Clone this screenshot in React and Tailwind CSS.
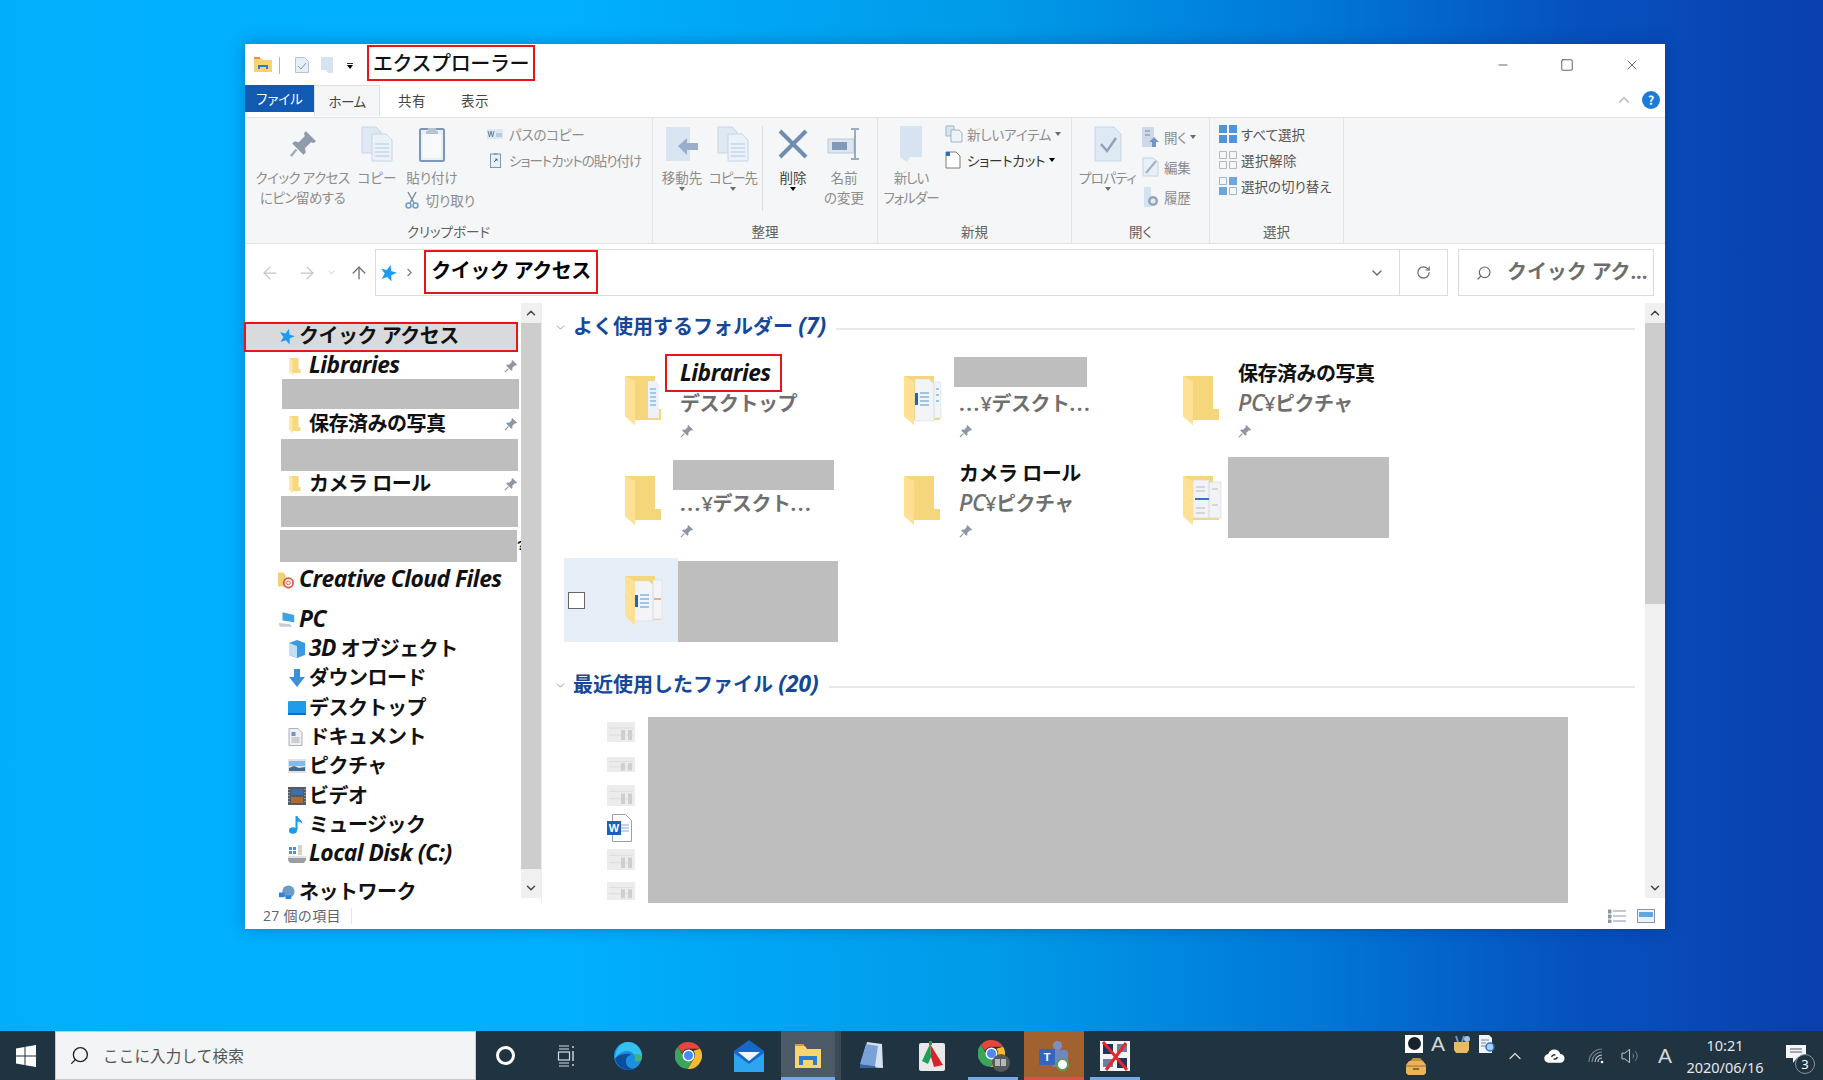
import React from "react";
import { ArrowLeft, ArrowRight, ArrowUp, ChevronDown, ChevronRight, ChevronUp, RotateCw, Search, Minus, Square, X } from "lucide-react";

const jp = "font-['Open_Sans','Noto_Sans_CJK_JP',sans-serif]";
const palt = "[font-feature-settings:'palt'] font-['Noto_Sans_CJK_JP',sans-serif]";

const Lat = ({ children }) => <i className="text-[1.14em] leading-none">{children}</i>;

const Star = ({ className = "w-4 h-4" }) => (
  <svg viewBox="0 0 16 16" className={`rotate-[15deg] ${className}`}>
    <path d="M8 .5 10 6l5.700.3-4.500 3.500L12.800 15.500 8 12.300 3.200 15.500l1.600-5.700L.3 6.300 6 6z" fill="#1e9bf0" />
  </svg>
);

const Pin = ({ className = "w-3 h-3" }) => (
  <svg viewBox="0 0 16 16" className={className}>
    <path d="M9.5 1 15 6.500 13.700 7.500 12.600 7 9.500 10 9.700 12.500 8.500 13.500 2.500 7.500 3.500 6.300 6 6.500 9 3.400 8.500 2.300z" fill="#8d96a3" />
    <path d="M5 11 1 15" stroke="#8d96a3" strokeWidth="1.500" />
  </svg>
);

const NavFolder = () => (
  <svg viewBox="0 0 12 18" className="w-[13px] h-[18px]">
    <path d="M1 1h9v11h2v4H4v2l-3-3z" fill="#f7d77f" />
    <path d="M1 1l3 2v15l-3-3z" fill="#ffe6a3" />
  </svg>
);

// big folder of the tile view, doc says what is sticking out of it
const BigFolder = ({ doc }) => (
  <svg viewBox="0 0 40 50" className="w-[40px] h-[50px]">
    <path d="M1 1h30v33h6v11H11v5L1 41z" fill="#f6d67b" />
    {doc === "side" && <path d="M24 6h8l3 4v33H24z" fill="#eef1f5" />}
    {doc === "side" && <path d="M26 14h6M26 18h6M26 22h6M26 26h6M26 30h6" stroke="#5a9bdc" strokeWidth="1.200" />}
    {doc === "blue" && <path d="M12 4h14l5 5v37H12zM31 7h7v36h-7z" fill="#f3f4f6" stroke="#d9dce0" strokeWidth=".6" />}
    {doc === "blue" && <path d="M12 18h3v12h-3z" fill="#1f66c1" />}
    {doc === "blue" && <path d="M17 18h9M17 22h9M17 26h9M17 30h9M33 14h3M33 20h3M33 26h3" stroke="#4b93d8" strokeWidth="1.100" />}
    {doc === "sheet" && <path d="M11 5h16v38H11zM27 7h12v36H27z" fill="#f1f3f5" stroke="#d5d8dc" strokeWidth=".6" />}
    {doc === "sheet" && <path d="M13 24h14" stroke="#1f66c1" strokeWidth="1.800" />}
    {doc === "sheet" && <path d="M14 12h9M14 16h9M14 33h9M14 38h9M30 14h6M30 30h6" stroke="#c9ccd1" strokeWidth="1.500" />}
    {doc === "orange" && <path d="M10 6h15l4 4v36H10zM29 5h9v39h-9z" fill="#f3f4f6" stroke="#d9dce0" strokeWidth=".6" />}
    {doc === "orange" && <path d="M11 20h3v12h-3z" fill="#1f66c1" />}
    {doc === "orange" && <path d="M16 20h9M16 24h9M16 28h9M16 32h9" stroke="#4b93d8" strokeWidth="1.100" />}
    {doc === "orange" && <path d="M30 24h7" stroke="#e8906a" strokeWidth="1.500" />}
    <path d="M1 1l10 5v44L1 41z" fill="#ffe196" />
  </svg>
);

const PageIcon = ({ lines }) => (
  <svg viewBox="0 0 32 36" className="w-[32px] h-[36px]">
    <path d="M1 1h14l5 5v21H1z" fill="#dfe9f4" stroke="#c6d5e6" />
    <path d="M11 8h14l6 6v21H11z" fill="#eaf1f8" stroke="#c6d5e6" />
    {lines && <path d="M14 18h14M14 22h14M14 26h14M14 30h14" stroke="#b6c8dc" />}
  </svg>
);

const Clipboard = () => (
  <svg viewBox="0 0 26 36" className="w-[26px] h-[36px]">
    <rect x="1" y="3" width="24" height="32" rx="1.500" fill="#e8eff7" stroke="#7d97b8" strokeWidth="2" />
    <rect x="4" y="8" width="18" height="24" fill="#f7f9fb" />
    <path d="M9 5V2h8v3h2v3H7V5z" fill="#b7c4d4" />
  </svg>
);

const MoveTo = () => (
  <svg viewBox="0 0 34 36" className="w-[34px] h-[36px]">
    <path d="M1 1h24v34H1z" fill="#d9e5f2" />
    <path d="M13 20 22 12v5h11v7H22v5z" fill="#98afca" />
  </svg>
);

const Caret = ({ dark }) => (
  <span className={`block w-0 h-0 border-x-[3px] border-x-transparent border-t-[4px] ${dark ? "border-t-black" : "border-t-[#6b6b6b]"}`} />
);

const Small = ({ icon, text, className = "text-[#8c8c8c] tracking-[-0.2px]", caret, dark }) => (
  <div className="flex items-center h-[26px]">
    <span className="w-[22px] flex justify-start items-center shrink-0">{icon}</span>
    <span className={`text-[13.5px] whitespace-nowrap ${palt} ${className}`}>{text}</span>
    {caret && <span className="ml-[4px]"><Caret dark={dark} /></span>}
  </div>
);

const BigBtn = ({ w, ml = "", icon, lines, caret, color = "text-[#8c8c8c]", label = "" }) => (
  <div className={`${w} ${ml} shrink-0 flex flex-col items-center`}>
    <div className="h-[35px] flex items-center justify-center">{icon}</div>
    <div className="mt-[6px] flex flex-col items-center">
      {lines.map((l) => (
        <span key={l} className={`text-[13.5px] leading-[20px] whitespace-nowrap ${palt} ${color} ${label}`}>{l}</span>
      ))}
      {caret && <Caret dark={caret === "dark"} />}
    </div>
  </div>
);

const Group = ({ w, label, children }) => (
  <div className={`${w} h-full shrink-0 flex flex-col border-r border-[#e2e3e5]`}>
    <div className="h-[102px] pt-[8px] flex">{children}</div>
    <div className={`flex-1 text-center text-[13.5px] leading-[23px] text-[#5f5f5f] ${palt}`}>{label}</div>
  </div>
);

const Ribbon = () => (
  <div className="h-[127px] flex bg-[#f5f6f7] border-y border-[#e2e3e5] shrink-0">
    <Group w="w-[408px]" label="クリップボード">
      <BigBtn w="w-[101px]" ml="ml-[7px]" lines={["クイック アクセス", "にピン留めする"]} label="tracking-[-0.5px]"
        icon={
          <svg viewBox="0 0 30 30" className="w-[28px] h-[28px]">
            <path d="M18 1 29 12 26 14 23.500 13 17 19.500 18 24 15.500 26.500 3.500 14.500 6 12 10.500 13 17 6.500 16 4z" fill="#8f9bab" />
            <path d="M8 21 2 28" stroke="#a3adba" strokeWidth="2.500" />
          </svg>
        } />
      <BigBtn w="w-[40px]" ml="ml-[4px]" lines={["コピー"]} icon={<PageIcon lines />} />
      <div className="ml-[7px] w-[56px] shrink-0 flex flex-col items-center">
        <BigBtn w="w-[56px]" lines={["貼り付け"]} icon={<Clipboard />} />
        <div className="mt-[3px] flex items-center w-[80px] ml-[25px]">
          <svg viewBox="0 0 14 18" className="w-[14px] h-[18px] mr-[7px] shrink-0">
            <path d="M3 1l6 11M11 1 5 12" stroke="#7d8da3" strokeWidth="1.500" />
            <circle cx="3.500" cy="14.500" r="2.500" fill="none" stroke="#6f9ccc" strokeWidth="1.500" />
            <circle cx="10.500" cy="14.500" r="2.500" fill="none" stroke="#6f9ccc" strokeWidth="1.500" />
          </svg>
          <span className={`text-[13.5px] whitespace-nowrap text-[#8c8c8c] ${palt}`}>切り取り</span>
        </div>
      </div>
      <div className="ml-[27px] -mt-[5px] flex flex-col">
        <Small text="パスのコピー"
          icon={
            <svg viewBox="0 0 16 10" className="w-[16px] h-[10px]">
              <rect width="16" height="10" fill="#dfe7f0" />
              <path d="M1 2l1.500 6L4 2l1.500 6L7 2" stroke="#5d7ea6" fill="none" />
              <path d="M9 5h6M9 7h6" stroke="#9ab0c8" />
            </svg>
          } />
        <Small text="ショートカットの貼り付け" className="text-[#8c8c8c] tracking-[-1px]"
          icon={
            <svg viewBox="0 0 11 16" className="w-[11px] h-[16px] ml-[3px]">
              <rect x=".5" y="2" width="10" height="13.500" fill="#e8eff7" stroke="#7d97b8" />
              <path d="M3.500 1h4v2h-4z" fill="#8ea2ba" />
              <path d="M4 10 7 7M5 7h2v2" stroke="#45689a" fill="none" />
            </svg>
          } />
      </div>
    </Group>

    <Group w="w-[225px]" label="整理">
      <BigBtn w="w-[46px]" ml="ml-[6px]" lines={["移動先"]} caret="gray" icon={<MoveTo />} />
      <BigBtn w="w-[48px]" ml="ml-[4px]" lines={["コピー先"]} caret="gray" label="tracking-[-1px]" icon={<PageIcon lines />} />
      <div className="w-px h-[85px] bg-[#dcdde0] ml-[5px] shrink-0" />
      <BigBtn w="w-[30px]" ml="ml-[15px]" lines={["削除"]} caret="dark" color="text-[#444]"
        icon={
          <svg viewBox="0 0 30 30" className="w-[30px] h-[30px]">
            <path d="M2 2 28 28M28 2 2 28" stroke="#6f8db3" strokeWidth="4" />
          </svg>
        } />
      <BigBtn w="w-[46px]" ml="ml-[13px]" lines={["名前", "の変更"]}
        icon={
          <svg viewBox="0 0 34 32" className="w-[34px] h-[32px]">
            <rect x="1" y="11" width="26" height="14" fill="#dce6f1" stroke="#b8c9dc" />
            <rect x="5" y="14" width="15" height="8" fill="#8199b7" />
            <path d="M28 2v28M24 1h8M24 31h8" stroke="#7f93ab" strokeWidth="1.500" />
          </svg>
        } />
    </Group>

    <Group w="w-[194px]" label="新規">
      <BigBtn w="w-[60px]" ml="ml-[3px]" lines={["新しい", "フォルダー"]} label="tracking-[-1px]"
        icon={
          <svg viewBox="0 0 22 36" className="w-[22px] h-[36px]">
            <path d="M0 0h22v31H10l-3 5-7-5z" fill="#d6e3f1" />
          </svg>
        } />
      <div className="-mt-[5px] flex flex-col ml-[4px]">
        <Small text="新しいアイテム" caret
          icon={
            <svg viewBox="0 0 18 18" className="w-[18px] h-[18px]">
              <path d="M1 1h8v10H1z" fill="#dbe5ef" stroke="#9eb3cb" />
              <path d="M6 5h8l3 3v9H6z" fill="#eef3f8" stroke="#9eb3cb" />
            </svg>
          } />
        <Small text="ショートカット" caret dark className="text-[#333] tracking-[-0.2px]"
          icon={
            <svg viewBox="0 0 16 18" className="w-[16px] h-[18px]">
              <path d="M1 1h10l4 4v12H1z" fill="#fff" stroke="#7a7a7a" />
              <path d="M1 1h4v4H1z" fill="#2b6fc2" />
            </svg>
          } />
      </div>
    </Group>

    <Group w="w-[138px]" label="開く">
      <BigBtn w="w-[55px]" ml="ml-[8px]" lines={["プロパティ"]} caret="gray" label="tracking-[-0.6px]"
        icon={
          <svg viewBox="0 0 28 36" className="w-[28px] h-[36px]">
            <path d="M1 1h19l7 7v27H1z" fill="#dfe9f4" stroke="#c6d5e6" />
            <path d="M7 18l6 7 9-13" stroke="#8fa2b8" strokeWidth="2.500" fill="none" />
          </svg>
        } />
      <div className="flex flex-col ml-[7px]">
        <div className="-mt-[2px] h-[30px]">
          <Small text="開く" caret
            icon={
              <svg viewBox="0 0 17 20" className="w-[17px] h-[20px]">
                <rect width="12" height="20" fill="#cdd9e6" />
                <path d="M3 4h5M3 8h5" stroke="#6f89a6" />
                <path d="M12 10l5 5h-3v5h-4v-5H7z" fill="#6f96c4" />
              </svg>
            } />
        </div>
        <Small text="編集"
          icon={
            <svg viewBox="0 0 17 20" className="w-[17px] h-[20px]">
              <path d="M1 1h10l5 4v14H1z" fill="#e8eff7" stroke="#c4d2e2" />
              <path d="M4 16 14 4" stroke="#9cb0c7" strokeWidth="2" />
            </svg>
          } />
        <div className="mt-[4px]">
          <Small text="履歴"
            icon={
              <svg viewBox="0 0 17 20" className="w-[17px] h-[20px]">
                <path d="M2 0h7v20H2z" fill="#d6e2ef" />
                <circle cx="11" cy="14" r="5" fill="#8fa5bf" />
                <circle cx="11" cy="14" r="2.500" fill="#e5ecf4" />
              </svg>
            } />
        </div>
      </div>
    </Group>

    <Group w="w-[134px]" label="選択">
      <div className="-mt-[5px] ml-[9px] flex flex-col">
        <Small text="すべて選択" className="text-[#555]"
          icon={
            <svg viewBox="0 0 18 18" className="w-[18px] h-[18px]">
              <path d="M0 0h8v8H0zM10 0h8v8h-8zM0 10h8v8H0zM10 10h8v8h-8z" fill="#4f95d8" />
            </svg>
          } />
        <Small text="選択解除" className="text-[#555] tracking-[0.5px]"
          icon={
            <svg viewBox="0 0 18 18" className="w-[18px] h-[18px]">
              <path d="M.5.500h7v7h-7zM10.500.500h7v7h-7zM.5 10.500h7v7h-7zM10.500 10.500h7v7h-7z" fill="none" stroke="#b8b8b8" />
            </svg>
          } />
        <Small text="選択の切り替え" className="text-[#555]"
          icon={
            <svg viewBox="0 0 18 18" className="w-[18px] h-[18px]">
              <path d="M.5.500h7v7h-7zM10.500 10.500h7v7h-7z" fill="none" stroke="#9cb5d0" />
              <path d="M10 0h8v8h-8zM0 10h8v8H0z" fill="#6fa5dc" />
            </svg>
          } />
      </div>
    </Group>
  </div>
);

const TitleBar = () => (
  <div className="h-[41px] flex items-start pt-[1px] shrink-0 relative">
    <svg viewBox="0 0 18 16" className="w-[18px] h-[16px] ml-[9px] mt-[12px]">
      <path d="M0 1h7l2 2h9v12H0z" fill="#f9d36e" />
      <path d="M0 0h6v2H0z" fill="#e8903c" />
      <path d="M4 12V8h10v4h-2v-2H6v2z" fill="#2a7fd4" />
    </svg>
    <span className="w-px h-[17px] bg-[#b5b5b5] ml-[7px] mt-[12px]" />
    <svg viewBox="0 0 14 16" className="w-[14px] h-[16px] ml-[15px] mt-[12px]">
      <path d="M.5.500h9l4 4v11H.5z" fill="#e8eff7" stroke="#b4c4d6" />
      <path d="M3 9l3 3 5-6" stroke="#7c9ac0" fill="none" />
    </svg>
    <svg viewBox="0 0 12 16" className="w-[12px] h-[16px] ml-[12px] mt-[12px]">
      <path d="M0 0h12v16H7l-2-3H0z" fill="#d6e3f1" />
    </svg>
    <span className="ml-[14px] mt-[18px] flex flex-col items-center gap-[1px]">
      <span className="block w-[6px] h-px bg-[#333]" />
      <Caret dark />
    </span>
    <div className="ml-[14px] w-[168px] h-[36px] border-2 border-[#e8141c] flex items-center justify-center">
      <span className="text-[20px] font-medium text-[#111] font-['Noto_Sans_CJK_JP',sans-serif] tracking-[-0.4px] whitespace-nowrap">エクスプローラー</span>
    </div>
    <div className="ml-auto h-[40px] flex items-center">
      <Minus className="w-[14px] h-[14px] text-[#555] mr-[50px]" strokeWidth={1.500} />
      <Square className="w-[14px] h-[14px] text-[#333] mr-[50px]" strokeWidth={1.300} />
      <X className="w-[16px] h-[16px] text-[#444] mr-[25px]" strokeWidth={1.200} />
    </div>
  </div>
);

const Tabs = () => (
  <div className={`h-[32px] flex shrink-0 text-[13.5px] ${palt}`}>
    <div className="w-[69px] h-[27px] bg-[#1259b3] text-white flex items-center justify-center">ファイル</div>
    <div className="w-[66px] h-[31px] bg-[#f5f6f7] border-x border-t border-[#dfe0e2] text-[#444] tracking-[-0.5px] flex items-center justify-center z-10">ホーム</div>
    <div className="ml-[18px] mt-[5px] text-[#444] tracking-[0.5px]">共有</div>
    <div className="ml-[35px] mt-[5px] text-[#444] tracking-[0.5px]">表示</div>
    <ChevronUp className="ml-auto mt-[6px] w-[18px] h-[18px] text-[#b0b0b0]" strokeWidth={1.500} />
    <div className="ml-[9px] mr-[5px] mt-[6px] w-[18px] h-[18px] rounded-full bg-[#1d7ad9] text-white text-[12px] font-bold flex items-center justify-center">?</div>
  </div>
);

const AddressBar = () => (
  <div className="h-[59px] flex items-start pt-[5px] shrink-0">
    <div className="w-[130px] h-[47px] flex items-center text-[#c4c4c4] shrink-0">
      <ArrowLeft className="ml-[15px] w-[20px] h-[20px]" strokeWidth={1.500} />
      <ArrowRight className="ml-[17px] w-[20px] h-[20px]" strokeWidth={1.500} />
      <ChevronDown className="ml-[9px] w-[11px] h-[11px]" />
      <ArrowUp className="ml-[12px] w-[20px] h-[20px] text-[#666]" strokeWidth={1.500} />
    </div>
    <div className="w-[1073px] h-[47px] border border-[#dcdcdc] flex items-center shrink-0">
      <Star className="ml-[4px] w-[17px] h-[17px]" />
      <ChevronRight className="ml-[6px] w-[13px] h-[13px] text-[#777]" strokeWidth={2} />
      <div className="ml-[8px] w-[174px] h-[44px] -mt-px border-2 border-[#e8141c] flex items-center justify-center pb-[2px]">
        <span className={`text-[20px] font-bold text-black tracking-[-0.5px] whitespace-nowrap ${jp}`}>クイック アクセス</span>
      </div>
      <ChevronDown className="ml-auto mr-[14px] w-[16px] h-[16px] text-[#666]" strokeWidth={2} />
      <div className="w-[48px] h-full border-l border-[#dcdcdc] flex items-center justify-center">
        <RotateCw className="w-[15px] h-[15px] text-[#666]" strokeWidth={1.800} />
      </div>
    </div>
    <div className="ml-[10px] w-[196px] h-[47px] border border-[#dcdcdc] flex items-center shrink-0">
      <Search className="ml-[17px] w-[16px] h-[16px] text-[#666] -scale-x-100" strokeWidth={1.800} />
      <span className={`ml-[15px] pb-[2px] text-[20px] font-bold text-[#6d6d6d] tracking-[-0.1px] whitespace-nowrap ${jp}`}>クイック アク...</span>
    </div>
  </div>
);

const navText = `text-[20px] font-bold text-[#111] whitespace-nowrap tracking-[-0.5px] ${jp}`;

const NavRow = ({ h = "h-[29.3px]", icon, children, pin, level = 1, mt = "" }) => (
  <div className={`${h} ${mt} flex items-center shrink-0`}>
    <span className={`${level === 1 ? "ml-[43px] w-[21px]" : "ml-[33px] w-[21px]"} flex justify-start shrink-0`}>{icon}</span>
    <span className={navText}>{children}</span>
    {pin && <Pin className="w-[14px] h-[14px] ml-auto mr-[3px]" />}
  </div>
);

const Gray = ({ className }) => <div className={`bg-[#bebebe] shrink-0 ${className}`} />;

const NavIcon = ({ kind }) => {
  const c = "w-[18px] h-[18px]";
  if (kind === "3d")
    return (
      <svg viewBox="0 0 18 18" className={c}>
        <path d="M9 0 17 3v12l-8 3-8-3V3z" fill="#3a9ae0" />
        <path d="M1 3l8 3v12l-8-3z" fill="#bfe0f7" />
      </svg>
    );
  if (kind === "down")
    return (
      <svg viewBox="0 0 18 18" className={c}>
        <path d="M6 0h6v8h5l-8 10L1 8h5z" fill="#3d8fd9" />
      </svg>
    );
  if (kind === "desk")
    return (
      <svg viewBox="0 0 18 14" className="w-[18px] h-[14px]">
        <rect width="18" height="14" rx="1" fill="#1e9bea" />
        <rect y="12" width="18" height="2" fill="#0f70bd" />
      </svg>
    );
  if (kind === "doc")
    return (
      <svg viewBox="0 0 14 18" className="w-[15px] h-[18px]">
        <path d="M.5.500h9l4 4v13H.5z" fill="#eef0f2" stroke="#a9b1ba" />
        <path d="M3 4h4v4H3z" fill="#6d93c0" />
        <path d="M3 10h8M3 12h8M3 14h8" stroke="#a6adb6" />
      </svg>
    );
  if (kind === "pic")
    return (
      <svg viewBox="0 0 18 14" className="w-[18px] h-[14px]">
        <rect width="18" height="14" fill="#dfe3e7" />
        <rect x="1" y="2" width="16" height="5" fill="#7fbde8" />
        <path d="M1 12V9l5-2 5 2 6-1v4z" fill="#456a8c" />
      </svg>
    );
  if (kind === "vid")
    return (
      <svg viewBox="0 0 18 18" className={c}>
        <rect width="18" height="18" fill="#565a5f" />
        <rect x="3" y="2" width="12" height="6" fill="#3f6fa8" />
        <rect x="3" y="10" width="12" height="6" fill="#b06b2b" />
        <path d="M1 2v14M17 2v14" stroke="#ddd" strokeDasharray="1 2" />
      </svg>
    );
  if (kind === "music")
    return (
      <svg viewBox="0 0 16 18" className="w-[16px] h-[18px]">
        <ellipse cx="5" cy="14.500" rx="4" ry="3.200" fill="#1d9be8" />
        <path d="M7.500 14V0h2c.5 3 5 4 5 8-1-1.500-3-2.500-5-2.500V14z" fill="#1d9be8" />
      </svg>
    );
  if (kind === "disk")
    return (
      <svg viewBox="0 0 18 18" className={c}>
        <path d="M1 2h3v3H1zM5 2h3v3H5zM1 6h3v3H1zM5 6h3v3H5z" fill="#2e9be6" />
        <path d="M10 0h4v10h-4z" fill="#cfd3d6" />
        <path d="M0 11h18v4l-2 3H2l-2-3z" fill="#9a9ea3" />
        <path d="M0 11h18v2H0z" fill="#dfe2e5" />
      </svg>
    );
  return null;
};

const NavPane = () => (
  <div className="w-[296px] h-full flex shrink-0">
    <div className="w-[276px] h-full flex flex-col pt-[19px]">
      <div className="h-[30px] ml-[-1px] w-[274px] bg-[#d8dadc] border-2 border-[#e8141c] flex items-center pb-[2px] shrink-0">
        <Star className="ml-[33px] w-[16px] h-[16px] mr-[4px]" />
        <span className={navText}>クイック アクセス</span>
      </div>
      <NavRow h="h-[27px]" icon={<NavFolder />} pin><Lat>Libraries</Lat></NavRow>
      <Gray className="h-[30px] w-[237px] ml-[37px]" />
      <NavRow h="h-[30px]" icon={<NavFolder />} pin>保存済みの写真</NavRow>
      <Gray className="h-[32px] w-[237px] ml-[36px]" />
      <NavRow h="h-[25px]" icon={<NavFolder />} pin>カメラ ロール</NavRow>
      <Gray className="h-[31px] w-[237px] ml-[36px]" />
      <div className="mt-[3px] flex items-center shrink-0">
        <Gray className="h-[32px] w-[237px] ml-[35px]" />
        <span className="text-[12px] font-bold leading-none text-[#111] font-['Liberation_Sans',sans-serif]">?</span>
      </div>
      <NavRow h="h-[36px]" level={0}
        icon={
          <svg viewBox="0 0 18 18" className="w-[17px] h-[18px]">
            <path d="M0 1h6l2 3v12H0z" fill="#f5cf78" />
            <circle cx="11" cy="12" r="5" fill="none" stroke="#e0503c" strokeWidth="1.800" />
            <circle cx="11" cy="12" r="2" fill="none" stroke="#e0503c" />
          </svg>
        }>
        <Lat>Creative Cloud Files</Lat>
      </NavRow>
      <NavRow h="h-[29.4px]" mt="mt-[7px]" level={0}
        icon={
          <svg viewBox="0 0 20 18" className="w-[18px] h-[17px]">
            <path d="M5 1l13 3v8L5 10z" fill="#3ba3e6" />
            <path d="M1 13l12 1 3 3H2z" fill="#c6ccd2" />
          </svg>
        }>
        <Lat>PC</Lat>
      </NavRow>
      <NavRow icon={<NavIcon kind="3d" />}><Lat>3D</Lat> オブジェクト</NavRow>
      <NavRow icon={<NavIcon kind="down" />}>ダウンロード</NavRow>
      <NavRow icon={<NavIcon kind="desk" />}>デスクトップ</NavRow>
      <NavRow icon={<NavIcon kind="doc" />}>ドキュメント</NavRow>
      <NavRow icon={<NavIcon kind="pic" />}>ピクチャ</NavRow>
      <NavRow icon={<NavIcon kind="vid" />}>ビデオ</NavRow>
      <NavRow icon={<NavIcon kind="music" />}>ミュージック</NavRow>
      <NavRow icon={<NavIcon kind="disk" />}><Lat>Local Disk (C:)</Lat></NavRow>
      <NavRow h="h-[29px]" mt="mt-[9px]" level={0}
        icon={
          <svg viewBox="0 0 18 18" className="w-[17px] h-[17px]">
            <circle cx="11" cy="8" r="6.500" fill="#6b9cc7" />
            <path d="M1 9h6v5H1z" fill="#2b86d6" />
            <path d="M8 12h6v4H8z" fill="#2b86d6" />
          </svg>
        }>
        ネットワーク
      </NavRow>
    </div>
    <Scrollbar thumb="h-[546px]" />
  </div>
);

const Scrollbar = ({ thumb, className = "" }) => (
  <div className={`w-[20px] h-[595px] bg-[#f0f0f0] flex flex-col shrink-0 ${className}`}>
    <div className="h-[20px] flex items-center justify-center shrink-0">
      <ChevronUp className="w-[14px] h-[14px] text-[#444]" strokeWidth={2.500} />
    </div>
    <div className={`${thumb} bg-[#cdcdcd] shrink-0`} />
    <div className="mt-auto h-[20px] flex items-center justify-center shrink-0">
      <ChevronDown className="w-[14px] h-[14px] text-[#444]" strokeWidth={2.500} />
    </div>
  </div>
);

const SectionHead = ({ children, mt = "" }) => (
  <div className={`h-[28px] flex items-center shrink-0 pr-[10px] ${mt}`}>
    <ChevronDown className="ml-[8px] w-[13px] h-[13px] text-[#888]" strokeWidth={1.500} />
    <span className={`ml-[6px] text-[20px] font-bold text-[#15479a] whitespace-nowrap ${jp}`}>{children}</span>
    <div className="flex-1 ml-[10px] h-[2px] bg-[#e7e8ea] mt-[4px]" />
  </div>
);

const Tile = ({ doc, name, sub, children, pin = true }) => (
  <div className="w-[279px] h-[84px] flex items-center pl-[60px] relative shrink-0">
    <BigFolder doc={doc} />
    {(name || sub) && (
      <div className="ml-[16px] h-full flex flex-col">
        <div className="h-[32px] flex items-center">
          <span className={`text-[20px] font-bold text-[#111] tracking-[-0.5px] whitespace-nowrap ${jp}`}>{name}</span>
        </div>
        <div className="h-[27px] flex items-center">
          <span className={`text-[20px] font-semibold text-[#6f6f6f] tracking-[-0.5px] whitespace-nowrap ${jp}`}>{sub}</span>
        </div>
        {pin && <Pin className="w-[14px] h-[14px] mt-[7px]" />}
      </div>
    )}
    {children}
  </div>
);

const Dots = ({ children }) => <span className="tracking-[1.500px] font-bold">{children}</span>;

const Thumb = ({ className = "h-[20px]" }) => (
  <svg viewBox="0 0 28 20" preserveAspectRatio="none" className={`w-[28px] ${className}`}>
    <rect width="28" height="20" fill="#ececec" />
    <path d="M2 6h24M2 13h24" stroke="#dcdcdc" />
    <path d="M14 8h4v10h-4zM21 8h4v10h-4z" fill="#cfcfcf" />
  </svg>
);

const Content = () => (
  <div className="flex-1 h-full flex border-l border-[#eeeeee] min-w-0">
    <div className="flex-1 min-w-0 flex flex-col pl-[4px]">
      <div className="h-[10px] shrink-0" />
      <SectionHead>よく使用するフォルダー <Lat>(7)</Lat></SectionHead>
      <div className="mt-[17px] flex ml-[18px]">
        <Tile doc="side" sub="デスクトップ" name={<Lat>Libraries</Lat>}>
          <div className="absolute left-[101px] -top-[4px] w-[117px] h-[38px] border-2 border-[#e8141c]" />
        </Tile>
        <Tile doc="blue" sub={<><Dots>...</Dots>¥デスクト<Dots>...</Dots></>}>
          <Gray className="absolute left-[111px] -top-[1px] w-[133px] h-[30px]" />
        </Tile>
        <Tile name="保存済みの写真" sub={<><Lat>PC</Lat>¥ピクチャ</>} />
      </div>
      <div className="mt-[16px] flex ml-[18px]">
        <Tile sub={<><Dots>...</Dots>¥デスクト<Dots>...</Dots></>}>
          <Gray className="absolute left-[109px] top-[2px] w-[161px] h-[30px]" />
        </Tile>
        <Tile name="カメラ ロール" sub={<><Lat>PC</Lat>¥ピクチャ</>} />
        <Tile doc="sheet">
          <Gray className="absolute left-[106px] -top-[1px] w-[161px] h-[81px]" />
        </Tile>
      </div>
      <div className="mt-[16px] flex ml-[18px]">
        <Tile>
          <div className="absolute left-0 top-0 w-[114px] h-full bg-[#e6eef7]" />
          <div className="absolute left-[4px] top-[34px] w-[17px] h-[17px] bg-white border border-[#666]" />
          <div className="absolute left-[60px] top-[17px]"><BigFolder doc="orange" /></div>
          <Gray className="absolute left-[114px] top-[3px] w-[160px] h-[81px]" />
        </Tile>
      </div>
      <SectionHead mt="mt-[29px]">最近使用したファイル <Lat>(20)</Lat></SectionHead>
      <div className="mt-[18px] flex ml-[61px]">
        <div className="w-[28px] h-[186px] mt-[5px] flex flex-col shrink-0">
          <Thumb />
          <div className="mt-[15px]"><Thumb className="h-[15px]" /></div>
          <div className="mt-[13px]"><Thumb className="h-[21px]" /></div>
          <div className="mt-[8px] h-[28px] relative w-[26px]">
            <svg viewBox="0 0 24 28" className="w-[24px] h-[28px] ml-[1px]">
              <path d="M4.500.500h13l6 6v21h-19z" fill="#fff" stroke="#9aa0a6" />
              <path d="M11 11h10M11 14h10M11 17h10" stroke="#7fa8d8" />
            </svg>
            <span className="absolute left-0 top-[7px] w-[14px] h-[14px] bg-[#1c5fb8] text-white text-[11px] font-bold leading-[14px] text-center font-['Liberation_Sans',sans-serif]">W</span>
          </div>
          <div className="mt-[7px]"><Thumb className="h-[21px]" /></div>
          <div className="mt-[12px]"><Thumb className="h-[18px]" /></div>
        </div>
        <Gray className="ml-[13px] w-[920px] h-[186px]" />
      </div>
    </div>
    <Scrollbar thumb="h-[281px]" />
  </div>
);

const Status = () => (
  <div className="flex-1 flex items-center relative">
    <span className={`ml-[18px] pb-[2px] text-[14px] text-[#5c6670] tracking-[0.3px] ${jp}`}>27 個の項目</span>
    <span className="ml-[10px] w-px h-[16px] bg-[#e5e5e5]" />
    <div className="ml-auto mr-[10px] flex items-center gap-[11px]">
      <svg viewBox="0 0 18 14" className="w-[18px] h-[14px]">
        <path d="M0 1h3v3H0zM0 6h3v3H0zM0 11h3v3H0zM5 2h13M5 7h13M5 12h13" fill="#8a97a6" stroke="#8a97a6" />
      </svg>
      <svg viewBox="0 0 18 14" className="w-[18px] h-[14px]">
        <rect x=".5" y=".5" width="17" height="13" fill="#eaf3fb" stroke="#8a97a6" />
        <rect x="2" y="3" width="14" height="5" fill="#5ea7e3" />
      </svg>
    </div>
  </div>
);

const TaskIcon = ({ w, ml = "", bg = "", line, children }) => (
  <div className={`${w} ${ml} ${bg} h-full flex items-center justify-center relative shrink-0`}>
    {children}
    {line && <span className={`absolute bottom-0 h-[3px] ${line}`} />}
  </div>
);

const Chrome = ({ size = "w-[27px] h-[27px]" }) => (
  <svg viewBox="0 0 28 28" className={size}>
    <path d="M14 0a14 14 0 0 1 12.100 7H14a7 7 0 0 0-6.500 4.400L3 4.800A14 14 0 0 1 14 0z" fill="#e8453c" />
    <path d="M26.100 7A14 14 0 0 1 13 28l6.200-10.100A7 7 0 0 0 19 9z" fill="#f9bb2d" />
    <path d="M3 4.800 9 15a7 7 0 0 0 10 3L13 28A14 14 0 0 1 3 4.800z" fill="#3ba55c" />
    <circle cx="14" cy="14" r="5.500" fill="#4a8af4" stroke="#fff" strokeWidth="1.500" />
  </svg>
);

const Taskbar = () => (
  <div className="h-[49px] bg-[#203340] flex shrink-0 overflow-hidden">
    <div className="w-[55px] h-full flex items-center justify-center shrink-0">
      <svg viewBox="0 0 20 22" className="w-[20px] h-[22px] -ml-[3px]">
        <path d="M0 3.500 8.500 2v8.500H0zM9.500 1.800 20 0v10.500H9.500zM0 11.500h8.500V20L0 18.500zM9.500 11.500H20V22L9.500 20.200z" fill="#fff" />
      </svg>
    </div>
    <div className="w-[421px] h-full bg-[#f3f4f5] border border-[#c9c9c9] flex items-center shrink-0">
      <Search className="ml-[13px] w-[21px] h-[21px] text-[#222] -scale-x-100" strokeWidth={1.500} />
      <span className="ml-[13px] text-[15.500px] tracking-[0.2px] text-[#555] font-['Noto_Sans_CJK_JP',sans-serif] whitespace-nowrap">ここに入力して検索</span>
    </div>
    <TaskIcon w="w-[58px]">
      <span className="w-[19px] h-[19px] rounded-full border-[3px] border-white" />
    </TaskIcon>
    <TaskIcon w="w-[64px]">
      <svg viewBox="0 0 20 22" className="w-[20px] h-[22px]">
        <path d="M3 1h10M3 4h10M3 18h10M3 21h10" stroke="#d8dde0" strokeWidth="1.200" />
        <rect x="2.500" y="7" width="11" height="8" fill="none" stroke="#d8dde0" strokeWidth="1.200" />
        <path d="M17 1v2M17 6v10M17 19v2" stroke="#d8dde0" strokeWidth="1.400" />
      </svg>
    </TaskIcon>
    <TaskIcon w="w-[60px]">
      <svg viewBox="0 0 28 28" className="w-[28px] h-[28px]">
        <circle cx="14" cy="14" r="14" fill="#1b8fe0" />
        <path d="M1 17C3 24 9 28 15 28c3 0 5-1 6-1-5 0-10-3-9-9 0-3 3-5 6-5-5-3-15 0-17 4z" fill="#0c4d9c" />
        <path d="M14 0c7 0 14 6 14 15 0 3-3 5-7 4 2-6-4-11-10-10-5 1-9 5-10 8C1 8 6 0 14 0z" fill="#35c1f1" />
        <path d="M28 15c0 3-3 5-7 4 1-2 1-5-1-7 4 0 8 1 8 3z" fill="#3fb66e" />
      </svg>
    </TaskIcon>
    <TaskIcon w="w-[60px]"><Chrome /></TaskIcon>
    <TaskIcon w="w-[61px]">
      <svg viewBox="0 0 30 32" className="w-[30px] h-[32px]">
        <path d="M15 0 30 11v21H0V11z" fill="#1668c7" />
        <path d="M4 12h22l-11 9z" fill="#eef6fd" />
        <path d="M0 13 15 24 30 13v19H0z" fill="#2da5ef" />
      </svg>
    </TaskIcon>
    <TaskIcon w="w-[54px]" ml="ml-[2px]" bg="bg-[#4b5a66]" line="left-0 right-0 bg-[#76a9e6]">
      <svg viewBox="0 0 26 24" className="w-[26px] h-[24px]">
        <path d="M0 2h10l2 3h14v19H0z" fill="#f9d56f" />
        <path d="M0 0h9v2H0z" fill="#e8903c" />
        <path d="M4 21v-9h18v9h-4v-5H8v5z" fill="#2b7dd1" />
      </svg>
    </TaskIcon>
    <span className="w-[6px] h-full bg-[#3b4956] shrink-0" />
    <TaskIcon w="w-[60px]">
      <svg viewBox="0 0 26 30" className="w-[26px] h-[30px]">
        <path d="M9 1 24 3l1 24-23-1z" fill="#d8e2ee" />
        <path d="M8 3 20 5 17 25 2 23z" fill="#7aa2d8" />
        <path d="M2 23l15 2 1 2H2z" fill="#3a63a8" />
      </svg>
    </TaskIcon>
    <TaskIcon w="w-[62px]">
      <svg viewBox="0 0 26 30" className="w-[26px] h-[30px]">
        <rect y="2" width="26" height="28" rx="2" fill="#e9e9e9" />
        <path d="M11 3 24 24l-9 2-3-10z" fill="#d8232a" />
        <path d="M11 3 3 20l6 3 3-7z" fill="#1f9e57" />
        <path d="M10 0h3v4h-3z" fill="#1f9e57" />
      </svg>
    </TaskIcon>
    <TaskIcon w="w-[61px]" line="left-[5px] w-[50px] bg-[#76a9e6]">
      <div className="relative w-[32px] h-[32px]">
        <Chrome size="w-[27px] h-[27px]" />
        <span className="absolute right-0 bottom-0 w-[18px] h-[18px] rounded-full bg-[#55585c] flex items-center justify-center gap-[1px]">
          <span className="w-[5px] h-[7px] bg-[#b5b8bb]" />
          <span className="w-[5px] h-[7px] bg-[#b5b8bb]" />
        </span>
      </div>
    </TaskIcon>
    <TaskIcon w="w-[60px]" bg="bg-[#a1622f]" line="left-0 right-0 bg-[#e0504a]">
      <div className="relative w-[30px] h-[30px]">
        <span className="absolute left-[14px] top-0 w-[9px] h-[9px] rounded-full bg-[#7a8fc4]" />
        <span className="absolute left-[13px] top-[9px] w-[16px] h-[17px] rounded-[3px] bg-[#6f86c0]" />
        <span className="absolute left-0 top-[8px] w-[16px] h-[16px] bg-[#3566bd] text-white text-[11px] font-bold text-center leading-[16px] font-['Liberation_Sans',sans-serif]">T</span>
        <span className="absolute right-0 bottom-0 w-[13px] h-[13px] rounded-full bg-white border-2 border-[#5a9e5a]" />
      </div>
    </TaskIcon>
    <TaskIcon w="w-[60px]" ml="ml-[1px]" line="left-[5px] w-[50px] bg-[#76a9e6]">
      <svg viewBox="0 0 30 30" className="w-[30px] h-[30px]">
        <rect width="30" height="30" fill="#f5f5f5" />
        <path d="M3 3h10v10H3zM17 17h10v10H17z" fill="#20365e" />
        <path d="M17 3h10v8H17zM3 18h10v8H3z" fill="#6b7f9e" />
        <path d="M3 1 27 29M26 2 6 29" stroke="#e8262c" strokeWidth="3" />
      </svg>
    </TaskIcon>

    <div className="ml-auto flex h-full text-[#e6e8ea] shrink-0">
      <div className="w-[95px] pl-[5px] pt-[3px] flex flex-col gap-[4px] shrink-0">
        <div className="flex items-center gap-[8px] h-[19px]">
          <span className="w-[18px] h-[18px] bg-white flex items-center justify-center">
            <span className="w-[13px] h-[13px] rounded-full bg-[#16222c]" />
          </span>
          <span className="text-[21px] leading-none font-thin font-['Liberation_Sans',sans-serif] text-[#d5d8db]">A</span>
          <svg viewBox="0 0 18 18" className="w-[18px] h-[18px]">
            <path d="M1 7h15v8l-2 3H3l-2-3z" fill="#e8b96a" />
            <path d="M5 7 3 1M9 7l2-6" stroke="#6a93c8" strokeWidth="2" />
            <circle cx="14" cy="4" r="3" fill="#9dc4ea" />
          </svg>
          <svg viewBox="0 0 16 18" className="w-[16px] h-[18px]">
            <path d="M0 0h10l3 3v15H0z" fill="#f0f3f7" />
            <path d="M2 5h8M2 8h5M2 11h5" stroke="#6f8bb0" />
            <circle cx="11" cy="12" r="4" fill="#a8d0f2" stroke="#2e6fc0" strokeWidth="1.500" />
          </svg>
        </div>
        <svg viewBox="0 0 22 18" className="w-[22px] h-[18px]">
          <path d="M4 4h14l3 4v8l-2 2H3l-2-2V8z" fill="#e9b458" />
          <path d="M5 4l3-3h7l3 3zM1 8h20v2H1z" fill="#c68f3b" />
          <path d="M8 11h6v2H8z" fill="#8f6a2b" />
        </svg>
      </div>
      <div className="w-[40px] flex items-center justify-center shrink-0">
        <ChevronUp className="w-[20px] h-[20px] text-[#d8dadc]" strokeWidth={1.500} />
      </div>
      <div className="w-[38px] flex items-center justify-center shrink-0">
        <svg viewBox="0 0 22 14" className="w-[21px] h-[14px]">
          <path d="M5 14a4.500 4.500 0 0 1-.5-9A6.500 6.500 0 0 1 17 5a4.500 4.500 0 0 1 0 9z" fill="#fff" />
          <path d="M8 8a3 3 0 0 1 4-2M14 8a3 3 0 0 1-4 2" stroke="#203340" strokeWidth="1.500" fill="none" />
        </svg>
      </div>
      <div className="w-[46px] flex items-center justify-center shrink-0">
        <svg viewBox="0 0 16 16" className="w-[16px] h-[16px]">
          <path d="M1 14A13 13 0 0 1 14 1M4 14A10 10 0 0 1 14 4" fill="none" stroke="#7c8790" strokeWidth="1.100" />
          <path d="M7 14a7 7 0 0 1 7-7M10 14a4 4 0 0 1 4-4" fill="none" stroke="#c9cdd0" strokeWidth="1.100" />
          <circle cx="14" cy="14" r="1.300" fill="#fff" />
        </svg>
      </div>
      <div className="w-[22px] flex items-center justify-center shrink-0">
        <svg viewBox="0 0 20 16" className="w-[19px] h-[16px] shrink-0">
          <path d="M1 5h3l5-4v14l-5-4H1z" fill="none" stroke="#c9cdd0" />
          <path d="M12 5.500a3 3 0 0 1 0 5M15 3a7 7 0 0 1 0 10" fill="none" stroke="#7c8790" />
        </svg>
      </div>
      <div className="w-[48px] flex items-center justify-center shrink-0">
        <span className="text-[21px] font-thin font-['Liberation_Sans',sans-serif] text-[#d5d8db]">A</span>
      </div>
      <div className="w-[72px] flex flex-col items-center justify-center leading-[22px] text-[14.500px] font-['Noto_Sans',sans-serif] shrink-0">
        <span>10:21</span>
        <span className="whitespace-nowrap">2020/06/16</span>
      </div>
      <div className="w-[62px] flex items-center justify-start pl-[25px] relative shrink-0">
        <svg viewBox="0 0 20 20" className="w-[20px] h-[20px] -mt-[3px]">
          <path d="M0 1h20v13h-9l-4 5v-5H0z" fill="#f5f6f7" />
          <path d="M4 5h12M4 8h12" stroke="#556" />
        </svg>
        <span className="absolute left-[34px] top-[23px] w-[20px] h-[20px] rounded-full bg-[#203340] border border-[#8a949c] text-[13px] leading-[18px] text-center text-white font-['Noto_Sans',sans-serif]">3</span>
      </div>
    </div>
  </div>
);

export default function App() {
  return (
    <div className="w-[1823px] h-[1080px] overflow-hidden flex flex-col">
      <div className="h-[1031px] pl-[245px] pt-[44px] shrink-0 bg-[linear-gradient(to_right,#00aefc_0%,#00b0ff_30%,#009ae8_55%,#0078d8_72%,#0652bf_86%,#0a3fae_100%)]">
        <div className="w-[1420px] h-[885px] bg-white flex flex-col shadow-[0_0_14px_rgba(0,40,90,0.35)]">
          <TitleBar />
          <Tabs />
          <Ribbon />
          <AddressBar />
          <div className="h-[600px] flex shrink-0">
            <NavPane />
            <Content />
          </div>
          <Status />
        </div>
      </div>
      <Taskbar />
    </div>
  );
}
